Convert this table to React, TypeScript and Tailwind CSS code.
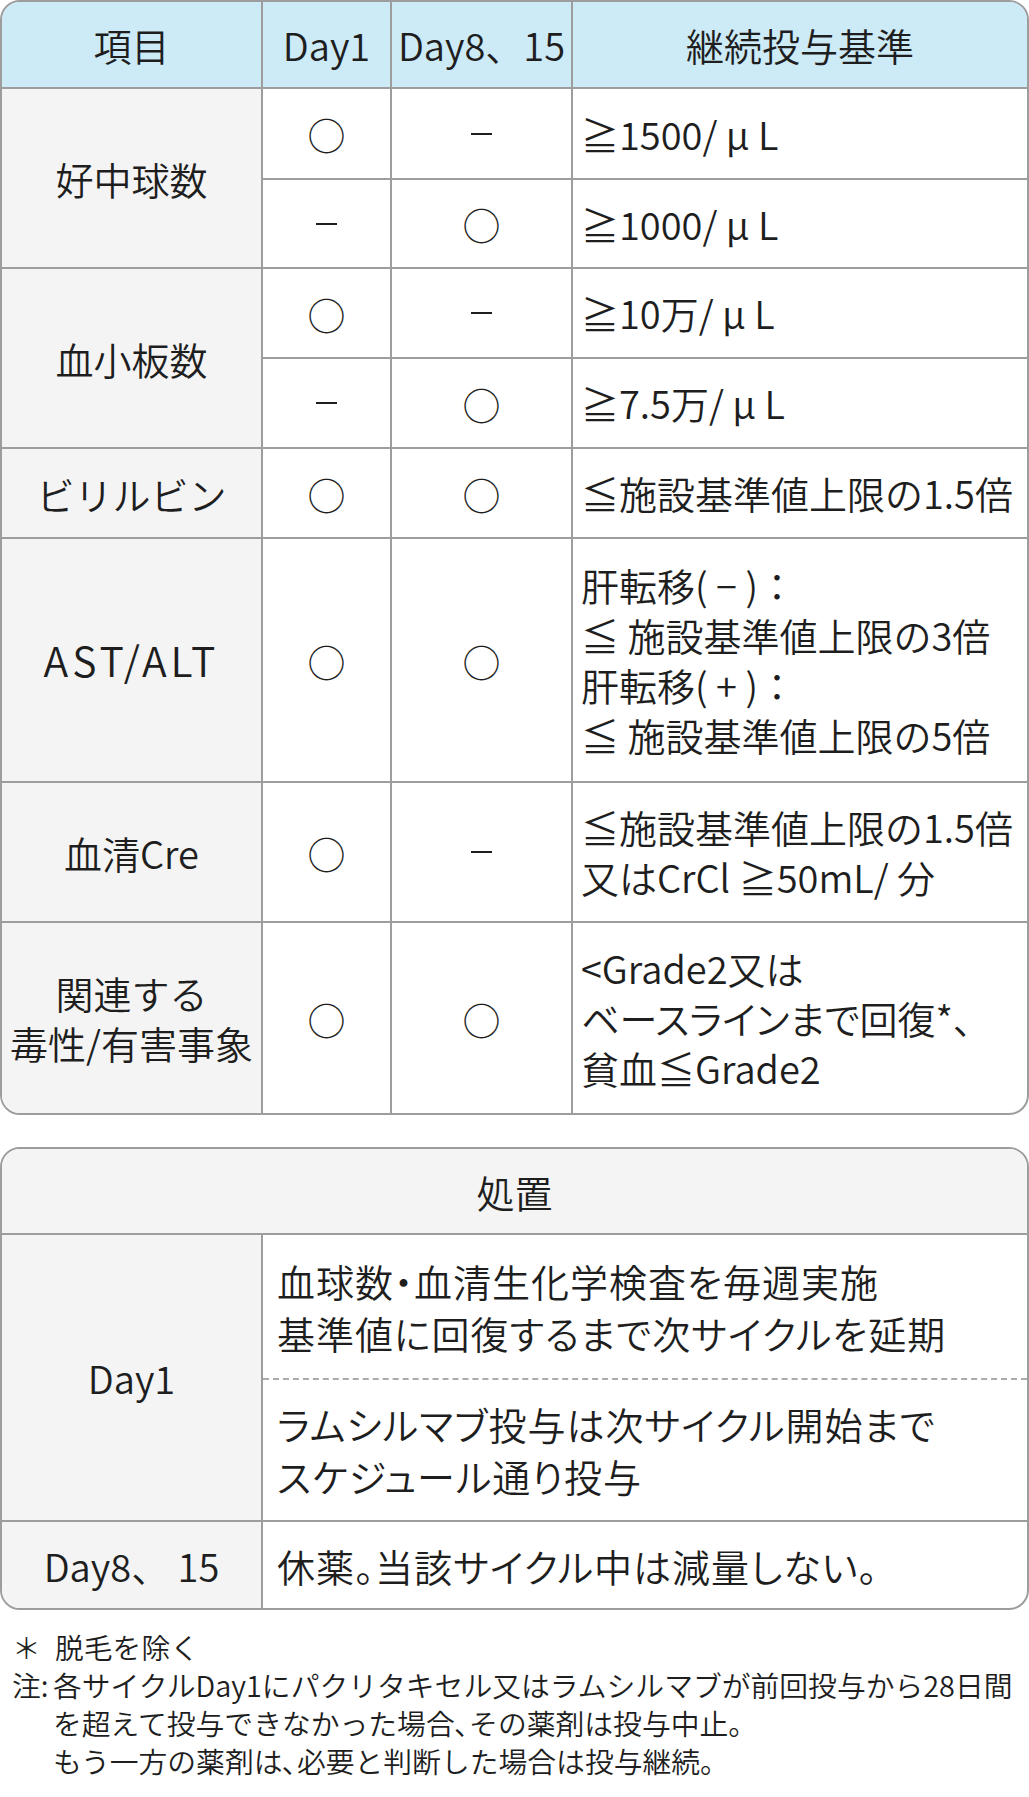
import clsx from "clsx";
import type { ReactNode } from "react";

function Cell({
  children,
  className = "",
  last = false,
  end = false,
}: {
  children?: ReactNode;
  className?: string;
  last?: boolean;
  end?: boolean;
}) {
  return (
    <div
      className={clsx(
        "flex items-center border-[#9d9d9d]",
        !end && "border-r-2",
        !last && "border-b-2",
        className
      )}
    >
      {children}
    </div>
  );
}

const head = "bg-[#cdeaf7] justify-center";
const label = "bg-[#f4f4f4] justify-center text-center";
const mark = "justify-center";
const crit = "pl-2 leading-[50px]";

// short bar used in the Day columns
const Dash = () => <span className="block h-[2px] w-[21px] bg-[#1e1e1e]" />;

export default function App() {
  return (
    <div className="w-[1029px] bg-white font-['Noto_Sans_CJK_JP',sans-serif] text-[38px] font-[350] text-[#1e1e1e]">
      <div className="grid grid-cols-[261px_129px_181px_1fr] grid-rows-[87px_91px_89px_90px_90px_90px_244px_140px_190px] overflow-hidden rounded-[20px] border-2 border-[#9d9d9d]">
        <Cell className={head}>項目</Cell>
        <Cell className={head}>Day1</Cell>
        <Cell className={head}>Day8、15</Cell>
        <Cell className={head} end>
          継続投与基準
        </Cell>

        <Cell className={clsx(label, "row-span-2")}>好中球数</Cell>
        <Cell className={mark}>○</Cell>
        <Cell className={mark}>
          <Dash />
        </Cell>
        <Cell className={crit} end>
          ≧1500/ μ L
        </Cell>
        <Cell className={mark}>
          <Dash />
        </Cell>
        <Cell className={mark}>○</Cell>
        <Cell className={crit} end>
          ≧1000/ μ L
        </Cell>

        <Cell className={clsx(label, "row-span-2")}>血小板数</Cell>
        <Cell className={mark}>○</Cell>
        <Cell className={mark}>
          <Dash />
        </Cell>
        <Cell className={crit} end>
          ≧10万/ μ L
        </Cell>
        <Cell className={mark}>
          <Dash />
        </Cell>
        <Cell className={mark}>○</Cell>
        <Cell className={crit} end>
          ≧7.5万/ μ L
        </Cell>

        <Cell className={label}>ビリルビン</Cell>
        <Cell className={mark}>○</Cell>
        <Cell className={mark}>○</Cell>
        <Cell className={crit} end>
          ≦施設基準値上限の1.5倍
        </Cell>

        <Cell className={clsx(label, "text-[41px] tracking-[4px]")}>AST/ALT</Cell>
        <Cell className={mark}>○</Cell>
        <Cell className={mark}>○</Cell>
        <Cell className={crit} end>
          <div>
            肝転移( − )：
            <br />≦ 施設基準値上限の3倍
            <br />
            肝転移( + )：
            <br />≦ 施設基準値上限の5倍
          </div>
        </Cell>

        <Cell className={label}>血清Cre</Cell>
        <Cell className={mark}>○</Cell>
        <Cell className={mark}>
          <Dash />
        </Cell>
        <Cell className={crit} end>
          <div>
            ≦施設基準値上限の1.5倍
            <br />
            又はCrCl ≧50mL/ 分
          </div>
        </Cell>

        <Cell className={clsx(label, "leading-[50px]")} last>
          <div>
            関連する
            <br />
            毒性/有害事象
          </div>
        </Cell>
        <Cell className={mark} last>
          ○
        </Cell>
        <Cell className={mark} last>
          ○
        </Cell>
        <Cell className={clsx(crit, "[font-feature-settings:'palt']")} last end>
          <div>
            &lt;Grade2又は
            <br />
            ベースラインまで回復*、
            <br />
            貧血≦Grade2
          </div>
        </Cell>
      </div>

      <div className="mt-[32px] grid grid-cols-[261px_1fr] grid-rows-[86px_287px_86px] overflow-hidden rounded-[20px] border-2 border-[#9d9d9d]">
        <Cell className="col-span-2 justify-center bg-[#f4f4f4]" end>
          処置
        </Cell>
        <Cell className={label}>Day1</Cell>
        <div className="flex flex-col border-b-2 border-[#9d9d9d] tracking-[1px] [font-feature-settings:'palt']">
          <div className="flex h-[145px] items-center border-b-2 border-dashed border-[#ababab] pl-[14px] leading-[52px]">
            <div>
              血球数・血清生化学検査を毎週実施
              <br />
              基準値に回復するまで次サイクルを延期
            </div>
          </div>
          <div className="flex flex-1 items-center pl-[14px] leading-[52px]">
            <div>
              ラムシルマブ投与は次サイクル開始まで
              <br />
              スケジュール通り投与
            </div>
          </div>
        </div>
        <Cell className={label} last>
          Day8、 15
        </Cell>
        <Cell className="pl-[14px] tracking-[1px] [font-feature-settings:'palt']" last end>
          休薬。当該サイクル中は減量しない。
        </Cell>
      </div>

      <div className="mt-[18px] pb-4 pl-3 text-[28.8px] leading-[38px]">
        <div className="flex">
          <span className="w-[43px] shrink-0">＊</span>
          <span>脱毛を除く</span>
        </div>
        <div className="flex">
          <span className="w-[41px] shrink-0">注:</span>
          <div>
            各サイクルDay1にパクリタキセル又はラムシルマブが前回投与から28日間
            <br />
            を超えて投与できなかった場合､その薬剤は投与中止。
            <br />
            もう一方の薬剤は､必要と判断した場合は投与継続。
          </div>
        </div>
      </div>
    </div>
  );
}
